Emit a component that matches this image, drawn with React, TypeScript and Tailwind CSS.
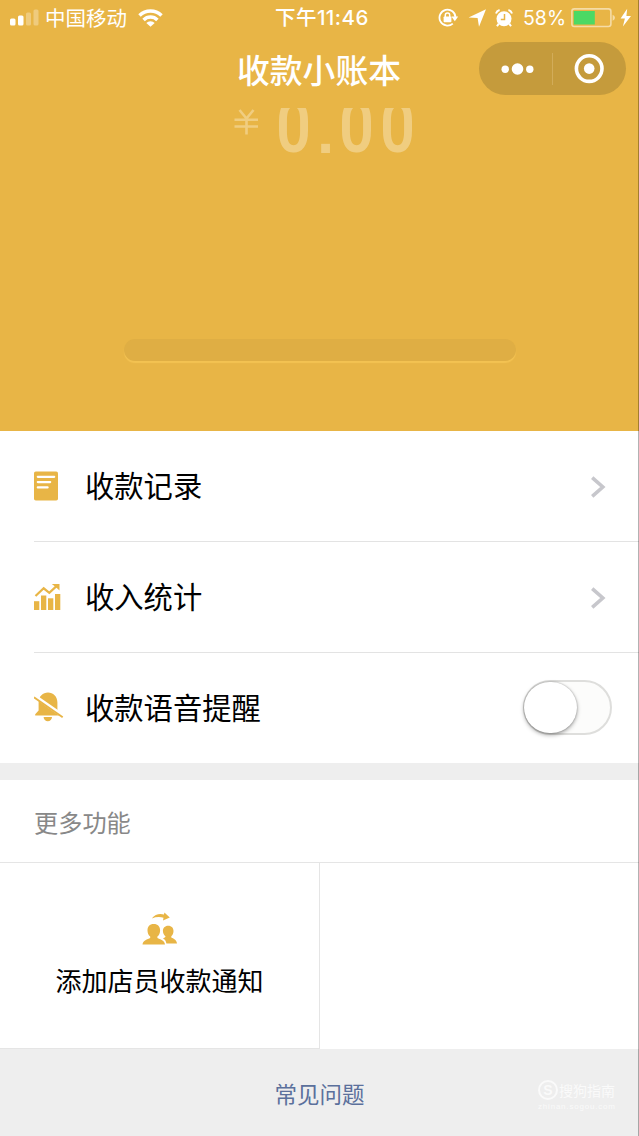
import type { ReactNode } from "react";

/* WeChat "收款小账本" mini-program home: iOS status bar, gold hero,
   three menu rows, a two-column feature grid and a footer link. */

const GOLD = "#e8b546";

function StatusBar() {
  return (
    <div className="flex h-9 items-center text-[20.5px] leading-none text-white">
      <div className="flex w-[275px] shrink-0 items-center pl-[10px]">
        <svg width="29" height="18" viewBox="0 0 29 18" fill="#fff">
          <rect x="0" y="9.5" width="5.5" height="7" rx="1.5" />
          <rect x="8" y="6.5" width="5.5" height="10" rx="1.5" />
          <rect x="16" y="3.5" width="5" height="13" rx="1.5" opacity=".3" />
          <rect x="23.5" y=".5" width="5" height="16" rx="1.5" opacity=".3" />
        </svg>
        <span className="-mt-[2px] ml-[6px]">中国移动</span>
        <svg className="-mt-px ml-[11px]" width="25" height="18" viewBox="0 0 25 18" fill="none" stroke="#fff" strokeWidth="3.5">
          <path d="M1.5 6.5a15.6 15.6 0 0 1 22 0" />
          <path d="M5.6 10.9a9.8 9.8 0 0 1 13.8 0" />
          <path d="M12.5 17.8l-4.2-3.9a5.9 5.9 0 0 1 8.4 0z" fill="#fff" stroke="none" />
        </svg>
      </div>
      <span className="w-[163px] shrink-0 whitespace-nowrap font-['Inter','Noto_Sans_CJK_SC',sans-serif] text-[20.5px] font-medium tracking-[0.45px]">
        下午11:46
      </span>
      <svg className="shrink-0" width="21" height="20" viewBox="0 0 21 20" fill="none" stroke="#fff" strokeWidth="1.8">
        <path d="M14.8 15.6a8 8 0 1 1 2.7-6" />
        <path d="M13.4 8.6h6.8l-3.4 4.6z" fill="#fff" stroke="none" />
        <rect x="5.6" y="8.4" width="7.8" height="5.8" rx=".8" fill="#fff" stroke="none" />
        <path d="M7.3 9V7.3a2.2 2.2 0 0 1 4.4 0V9" strokeWidth="1.5" />
      </svg>
      <svg className="ml-[9px] shrink-0" width="18" height="18" viewBox="0 0 18 18" fill="#fff">
        <path d="M18 .2L11 17.8 9.6 9 .6 8.4z" />
      </svg>
      <svg className="-mt-px ml-[9px] shrink-0" width="18" height="18" viewBox="0 0 18 18" fill="none" stroke="#fff">
        <circle cx="9" cy="9.7" r="7.5" fill="#fff" stroke="none" />
        <path d="M1 4.5A5 5 0 0 1 4.6 1M17 4.5A5 5 0 0 0 13.4 1" strokeWidth="2" />
        <path d="M3.8 14.6l-1.8 2.6M14.2 14.6l1.8 2.6" strokeWidth="2" />
        <path d="M9.5 5v5.4H5.8" stroke={GOLD} strokeWidth="1.5" />
      </svg>
      <span className="ml-[10px] mt-px w-[43px] shrink-0 whitespace-nowrap font-['Inter',sans-serif] text-[19.5px]">58%</span>
      <svg className="ml-[5px] shrink-0" width="62" height="20" viewBox="0 0 62 20">
        <rect x=".9" y=".9" width="39" height="17.6" rx="2.5" fill="none" stroke="#f5dca6" strokeWidth="1.6" />
        <rect x="2.8" y="3" width="21" height="13.5" fill="#4cd964" />
        <path d="M41.6 6.7q2.4.8 2.4 3t-2.4 3z" fill="#f5dca6" />
        <path d="M56.2.8l-6.6 9.6h4.3l-2 8.2L60 8h-4.6z" fill="#fff" />
      </svg>
    </div>
  );
}

function NavBar() {
  return (
    <div className="flex h-[72px] justify-end pr-[13px] pt-[6px]">
      <h1 className="mr-[78px] mt-[3px] text-[32.8px] font-medium leading-[47px] text-white">收款小账本</h1>
      <div className="flex h-[53px] w-[147px] items-center rounded-full bg-[#c59b3c]">
        <svg className="w-[73px]" width="73" height="54" viewBox="0 0 73 54" fill="#fff">
          <circle cx="26.2" cy="27.2" r="3.7" />
          <circle cx="38.5" cy="27" r="5.8" />
          <circle cx="50.8" cy="27.2" r="3.7" />
        </svg>
        <span className="h-[32px] w-px bg-[#d2ac59]" />
        <svg width="73" height="54" viewBox="0 0 73 54">
          <circle cx="36.2" cy="26.6" r="12.8" fill="none" stroke="#fff" strokeWidth="3.6" />
          <circle cx="36.2" cy="26.6" r="5.3" fill="#fff" />
        </svg>
      </div>
    </div>
  );
}

function ReceiptIcon() {
  return (
    <svg width="30" height="30" viewBox="0 0 30 30">
      <rect x="0" y=".5" width="24" height="29" rx="1.8" fill={GOLD} />
      <path d="M3.8 5.8h16.4M3.8 11.1h12.4M3.8 16.4h9.8" stroke="#fff" strokeWidth="2.2" strokeLinecap="round" />
    </svg>
  );
}

function ChartIcon() {
  return (
    <svg width="30" height="30" viewBox="0 0 30 30" fill={GOLD}>
      <rect x="0" y="19.2" width="5.3" height="8.8" />
      <rect x="7" y="13.5" width="5.3" height="14.5" />
      <rect x="14" y="16.3" width="5.3" height="11.7" />
      <rect x="21" y="12" width="5.3" height="16" />
      <path d="M1.5 14l8.2-7.7 5.6 4.5 8-7.4" fill="none" stroke={GOLD} strokeWidth="2.2" />
      <path d="M17.8 1.9h7.7v6.7l-2.2-2-2.6-2.4z" />
    </svg>
  );
}

function BellOffIcon() {
  return (
    <svg className="-mt-[2px]" width="30" height="30" viewBox="0 0 30 30" fill={GOLD}>
      <path d="M4.6 18.5v-8.3C4.6 4.3 9 .4 14 .4s9.4 3.9 9.4 9.8v8.3l3.3 3.7v1.2H1.2v-1.2z" />
      <path d="M9.6 25h8.4a4.2 4.2 0 0 1-8.4 0z" />
      <path d="M.5 4l28.4 19.9" stroke="#fff" strokeWidth="3.8" />
      <path d="M-.1 5.3l28.8 20" stroke={GOLD} strokeWidth="1.9" />
    </svg>
  );
}

function ClerksIcon() {
  return (
    <svg width="36" height="34" viewBox="0 0 36 34" fill={GOLD}>
      <path d="M11.7 12c4.2 0 6.4 2.7 6.4 6.4 0 2.6-1 4.8-2.7 6v1.5c2.6 1.3 7.4 2.4 7.6 6.7H.5c.2-4.3 5.1-5.4 7.7-6.7v-1.5c-1.7-1.2-2.7-3.4-2.7-6 0-3.7 2.1-6.4 6.2-6.4z" />
      <path d="M26.2 13.7c3.5 0 5.3 2.4 5.3 5.4 0 2.2-.8 4-2.2 5.1v1.2c2.2 1.1 5.4 2.2 5.7 6.2H24.4c-.4-3-1.6-4.3-3.4-5.2 1-.5 1.6-.8 2.4-1.3v-.9c-1.4-1-2.5-2.9-2.5-5.1 0-3 1.9-5.4 5.3-5.4z" />
      <path d="M9.8 6.4C13 1.9 18.4 1.2 22 2.6L22.4.4l5.4 5.2-6.8 3 .5-2.8c-3.5-1.2-7.8-.9-11.7.6z" />
    </svg>
  );
}

function Chevron() {
  return (
    <svg width="15" height="22" viewBox="0 0 15 22" fill="none" stroke="#c7c7cc" strokeWidth="3.6">
      <path d="M1.2 1.7l10.6 9.3L1.2 20.3" />
    </svg>
  );
}

function Toggle() {
  return (
    <div className="-mt-px h-[55px] w-[89px] rounded-full border-2 border-[#dededc] bg-[#fcfcfb]">
      <div className="-ml-px h-[51px] w-[53px] rounded-full bg-white shadow-[0_2px_4px_rgba(0,0,0,0.34),0_0_2px_rgba(0,0,0,0.3)]" />
    </div>
  );
}

type RowProps = { icon: ReactNode; label: string; last?: boolean; children: ReactNode };

function Row({ icon, label, last, children }: RowProps) {
  return (
    <div className={`ml-[34px] flex items-center ${last ? "h-[110px]" : "h-[111px] border-b border-[#e3e3e3]"}`}>
      {icon}
      <span className="ml-[21px] flex-1 pb-[5px] text-[29.3px] leading-[44px]">{label}</span>
      {children}
    </div>
  );
}

export default function App() {
  return (
    <div className="relative flex h-[1136px] w-[639px] flex-col overflow-hidden bg-[#eeeeee] font-['Noto_Sans_CJK_SC',sans-serif] text-black">
      <header className="h-[431px] bg-[#e8b546]">
        <StatusBar />
        <NavBar />
        {/* the amount is scrolled part-way under the nav bar */}
        <div className="h-[231px] overflow-hidden text-[#f0cd80]">
          <div className="-mt-[19px] flex items-start pl-[234px]">
            <svg className="mt-[20px]" width="25" height="26" viewBox="0 0 25 26" fill="none" stroke="#f0cd80" strokeWidth="2.6">
              <path d="M5.5 1l7 8.5L19.5 1M12.5 9v16.5M.5 10.8h23.5M.5 17.5h23.5" />
            </svg>
            <div className="ml-[17px] flex font-['Roboto',sans-serif] text-[73px] font-semibold leading-[76px]">
              <span className="w-[41px] origin-left scale-x-[.84]">0</span>
              <span className="w-[22px] pt-[5px] font-['Liberation_Sans',sans-serif] text-[62px] font-bold">.</span>
              <span className="w-[41px] origin-left scale-x-[.84]">0</span>
              <span className="w-[41px] origin-left scale-x-[.84]">0</span>
            </div>
          </div>
        </div>
        <div className="mx-auto h-[22px] w-[392px] rounded-full bg-[#dfae44] shadow-[0_2px_1px_#f3c252]" />
      </header>

      <section className="bg-white">
        <Row icon={<ReceiptIcon />} label="收款记录">
          <div className="mr-[33px] mt-[2px]">
            <Chevron />
          </div>
        </Row>
        <Row icon={<ChartIcon />} label="收入统计">
          <div className="mr-[33px] mt-[2px]">
            <Chevron />
          </div>
        </Row>
        <Row icon={<BellOffIcon />} label="收款语音提醒" last>
          <div className="mr-[27px]">
            <Toggle />
          </div>
        </Row>
      </section>

      <section className="mt-[17px] bg-white">
        <h2 className="h-[83px] border-b border-[#e5e5e5] pl-[34px] text-[24.2px] leading-[84px] text-[#888888]">更多功能</h2>
        <div className="flex h-[186px]">
          <div className="flex w-[320px] flex-col items-center border-b border-r border-[#e5e5e5] pt-[49px]">
            <ClerksIcon />
            <span className="mt-[15px] text-[26px] leading-[38px]">添加店员收款通知</span>
          </div>
        </div>
      </section>

      <footer className="flex flex-1 justify-center pt-[27px]">
        <a className="text-[22.5px] leading-[34px] text-[#5b709c]">常见问题</a>
      </footer>

      <div className="absolute bottom-[23px] right-[24px] w-[77px] text-[#fafafa]">
        <div className="flex items-center">
          <span className="flex size-[20px] shrink-0 items-center justify-center rounded-full border-2 border-[#fafafa] font-['Liberation_Sans',sans-serif] text-[14px] font-bold leading-none">
            S
          </span>
          <span className="ml-px whitespace-nowrap text-[14px] leading-[22px]">搜狗指南</span>
        </div>
        <div className="whitespace-nowrap font-['Liberation_Sans',sans-serif] text-[8px] leading-[12px] tracking-[0.8px]">
          zhinan.sogou.com
        </div>
      </div>
      <div className="absolute inset-y-0 right-0 w-px bg-black/30" />
    </div>
  );
}
